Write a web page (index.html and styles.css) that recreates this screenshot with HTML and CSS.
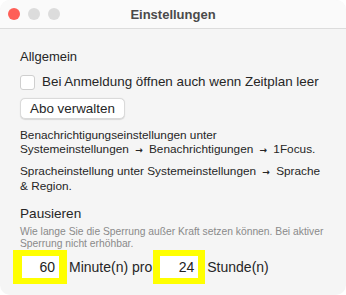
FILE: index.html
```html
<!DOCTYPE html>
<html lang="de">
<head>
<meta charset="utf-8">
<title>Einstellungen</title>
<link rel="stylesheet" href="styles.css">
</head>
<body>
<div class="window">
  <div class="titlebar">
    <div class="lights">
      <span class="light red"></span>
      <span class="light gray"></span>
      <span class="light gray"></span>
    </div>
    <div class="title">Einstellungen</div>
    <div></div>
  </div>
  <div class="content">
    <div class="heading">Allgemein</div>
    <label class="check-row">
      <span class="checkbox"></span>
      <span>Bei Anmeldung öffnen auch wenn Zeitplan leer</span>
    </label>
    <div class="btn-row"><button class="btn">Abo verwalten</button></div>
    <p class="para">Benachrichtigungseinstellungen unter<br>Systemeinstellungen <span class="arrow">→</span> Benachrichtigungen <span class="arrow">→</span> 1Focus.</p>
    <p class="para">Spracheinstellung unter Systemeinstellungen <span class="arrow">→</span> Sprache<br>&amp; Region.</p>
    <div class="heading heading2">Pausieren</div>
    <p class="hint">Wie lange Sie die Sperrung außer Kraft setzen können. Bei aktiver Sperrung nicht erhöhbar.</p>
    <div class="pause-row">
      <span class="hl hl1"><span class="field f1">60</span></span>
      <span class="lbl">Minute(n) pro</span>
      <span class="hl hl2"><span class="field f2">24</span></span>
      <span class="lbl">Stunde(n)</span>
    </div>
  </div>
</div>
</body>
</html>
```
FILE: styles.css
```css
html, body {
  margin: 0;
  padding: 0;
  background: #ffffff;
}
body {
  font-family: "Liberation Sans", Arial, sans-serif;
  color: #262626;
}
.window {
  width: 346px;
  height: 295px;
  border-radius: 10px;
  background: #f5f5f5;
  overflow: hidden;
  box-sizing: border-box;
}
.titlebar {
  height: 28px;
  background: #fafafa;
  border-bottom: 1px solid #dcdcdc;
  display: grid;
  grid-template-columns: 1fr auto 1fr;
  align-items: center;
}
.lights {
  display: flex;
  gap: 8px;
  padding-left: 8px;
}
.light {
  width: 12px;
  height: 12px;
  border-radius: 50%;
}
.red { background: #fe5f57; }
.gray { background: #dcdcdc; }
.title {
  font-size: 13px;
  font-weight: bold;
  color: #4a4a4a;
}
.content {
  padding: 20px 20px 0 20px;
}
.heading {
  font-size: 13px;
  line-height: 16px;
  color: #262626;
}
.check-row {
  display: flex;
  align-items: center;
  gap: 7px;
  margin-top: 9px;
  font-size: 13.4px;
  line-height: 16px;
}
.checkbox {
  width: 13px;
  height: 13px;
  border: 1px solid #cfcfcf;
  border-radius: 3px;
  background: #ffffff;
}
.btn-row {
  margin-top: 8px;
  display: flex;
}
.btn {
  font-family: inherit;
  font-size: 13.4px;
  color: #262626;
  background: #ffffff;
  border: 1px solid #dadada;
  border-radius: 5px;
  height: 21px;
  padding: 0 9px;
  box-shadow: 0 0.5px 1px rgba(0,0,0,0.12);
}
.para {
  margin: 9px 0 0 0;
  font-size: 11.8px;
  line-height: 14px;
  color: #262626;
}
.para + .para { margin-top: 7px; }
.arrow {
  font-family: "DejaVu Sans", sans-serif;
  font-size: 9px;
  font-weight: bold;
  margin: 0 3px;
}
.heading2 {
  margin-top: 13px;
  font-size: 13.6px;
}
.hint {
  margin: 4px 0 0 0;
  font-size: 10.3px;
  line-height: 12px;
  color: #8a8a8a;
}
.pause-row {
  display: flex;
  align-items: center;
  margin-left: -7px;
  margin-top: 0;
  font-size: 14px;
}
.hl {
  background: #ffff00;
  display: flex;
  padding: 6px 8px 6px 9px;
}
.hl2 { padding: 6px 7px 6px 7px; margin-left: 1px; }
.field {
  background: #ffffff;
  height: 22px;
  line-height: 22px;
  text-align: right;
  box-sizing: border-box;
  padding-right: 4px;
  color: #222;
}
.f1 { width: 37px; }
.f2 { width: 38px; }
.lbl {
  padding-left: 2px;
  color: #262626;
}
```
